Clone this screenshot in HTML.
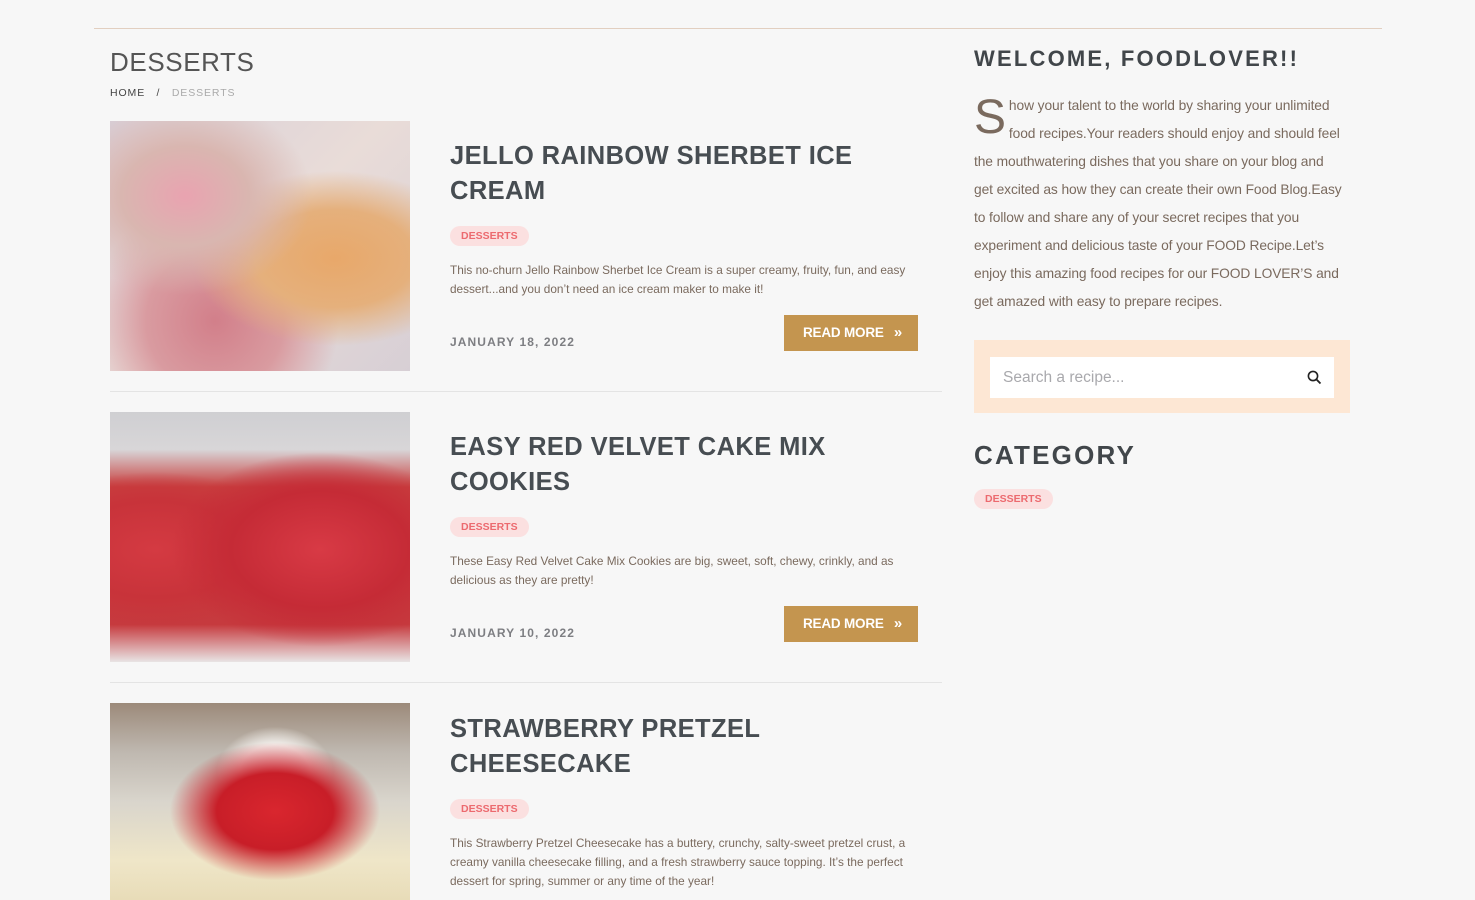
<!DOCTYPE html>
<html><head><meta charset="utf-8"><style>
*{margin:0;padding:0;box-sizing:border-box}
body{width:1475px;height:900px;overflow:hidden;background:#f7f7f7;font-family:"Liberation Sans",sans-serif;position:relative}
.abs{position:absolute}
.topline{left:94px;top:28px;width:1288px;height:1px;background:#e2cfc0}
h1{position:absolute;left:110px;top:47px;font-size:26px;font-weight:normal;color:#555;letter-spacing:0.6px}
.bc{left:110px;top:87px;font-size:10.5px;letter-spacing:0.9px;color:#444}
.bc span{color:#aaa}
.img{position:absolute;left:110px;width:300px;height:250px;overflow:hidden}
.title{position:absolute;left:450px;font-size:25.5px;font-weight:bold;color:#474d52;line-height:35px;letter-spacing:0.4px;width:460px}
.tag{position:absolute;height:20px;padding:0 11px;border-radius:10px;background:#fbe0e0;color:#ec6a6f;font-size:10.5px;font-weight:bold;line-height:20px}
.ex{position:absolute;left:450px;width:470px;font-size:11.8px;line-height:19px;color:#7a6a5e}
.date{position:absolute;left:450px;font-size:12px;font-weight:bold;letter-spacing:1.1px;color:#7d7e82}
.btn{position:absolute;left:784px;width:134px;height:36px;background:#c4954f;color:#fff;font-size:13.5px;font-weight:bold;line-height:36px;padding-left:19px;letter-spacing:-0.2px}
.btn b{position:absolute;right:16px;top:0;font-size:15px}
.div{position:absolute;left:110px;width:832px;height:1px;background:#e4e4e4}
.sh{position:absolute;left:974px;font-weight:bold;color:#41464a;letter-spacing:2.2px}
.p{left:974px;top:92px;width:400px;font-size:13.8px;line-height:28px;color:#7a6a5e;letter-spacing:-0.1px;white-space:nowrap}
.dc{float:left;font-size:48px;line-height:40px;margin:6px 3px 0 0;color:#7a6a5e}
</style></head><body>
<div class="abs topline"></div>
<h1>DESSERTS</h1>
<div class="abs bc">HOME &nbsp;&nbsp;/&nbsp;&nbsp; <span>DESSERTS</span></div>

<div class="img" style="top:121px;background:radial-gradient(ellipse at 25% 30%,#e9a3b0 0,#d9b6b0 20%,transparent 40%),radial-gradient(ellipse at 75% 55%,#e8a86a 0,#e5b07c 25%,transparent 45%),radial-gradient(ellipse at 35% 80%,#d27f8a 0,#d99ba0 25%,transparent 45%),linear-gradient(135deg,#d8cfd8,#e9dcd8 50%,#d7cfd5)"></div>
<div class="title" style="top:139px">JELLO RAINBOW SHERBET ICE CREAM</div>
<div class="tag" style="left:450px;top:226px">DESSERTS</div>
<div class="ex" style="top:261px">This no-churn Jello Rainbow Sherbet Ice Cream is a super creamy, fruity, fun, and easy dessert...and you don’t need an ice cream maker to make it!</div>
<div class="date" style="top:335px">JANUARY 18, 2022</div>
<div class="btn" style="top:315px">READ MORE<b>»</b></div>
<div class="div" style="top:391px"></div>

<div class="img" style="top:412px;background:radial-gradient(ellipse at 70% 55%,#d83a45 0,#c52b36 30%,transparent 50%),radial-gradient(ellipse at 15% 55%,#d43a42 0,#c8333a 25%,transparent 40%),linear-gradient(180deg,#cfcfd2 0,#d8d6d8 15%,#c8403f 30%,#c63a3e 85%,#e8e4e4 100%)"></div>
<div class="title" style="top:430px">EASY RED VELVET CAKE MIX COOKIES</div>
<div class="tag" style="left:450px;top:517px">DESSERTS</div>
<div class="ex" style="top:552px">These Easy Red Velvet Cake Mix Cookies are big, sweet, soft, chewy, crinkly, and as delicious as they are pretty!</div>
<div class="date" style="top:626px">JANUARY 10, 2022</div>
<div class="btn" style="top:606px">READ MORE<b>»</b></div>
<div class="div" style="top:682px"></div>

<div class="img" style="top:703px;height:197px;background:radial-gradient(ellipse at 55% 55%,#d9262e 0,#c81e28 25%,transparent 45%),radial-gradient(ellipse at 55% 35%,#fff 0,#f3f0ec 15%,transparent 25%),linear-gradient(180deg,#9c8a7a 0,#bfb8b0 25%,#d9d5cc 50%,#efe6c8 80%,#e8dcb8 100%)"></div>
<div class="title" style="top:712px">STRAWBERRY PRETZEL CHEESECAKE</div>
<div class="tag" style="left:450px;top:799px">DESSERTS</div>
<div class="ex" style="top:834px;width:470px">This Strawberry Pretzel Cheesecake has a buttery, crunchy, salty-sweet pretzel crust, a creamy vanilla cheesecake filling, and a fresh strawberry sauce topping. It’s the perfect dessert for spring, summer or any time of the year!</div>

<div class="sh" style="top:46px;font-size:22px">WELCOME, FOODLOVER!!</div>
<div class="abs p"><span class="dc">S</span>how your talent to the world by sharing your unlimited<br>food recipes.Your readers should enjoy and should feel<br>the mouthwatering dishes that you share on your blog and<br>get excited as how they can create their own Food Blog.Easy<br>to follow and share any of your secret recipes that you<br>experiment and delicious taste of your FOOD Recipe.Let’s<br>enjoy this amazing food recipes for our FOOD LOVER’S and<br>get amazed with easy to prepare recipes.</div>
<div class="abs" style="left:974px;top:340px;width:376px;height:73px;background:#fde7d4"></div>
<div class="abs" style="left:990px;top:357px;width:344px;height:41px;background:#fff;font-size:15.5px;color:#a9a9ad;line-height:41px;padding-left:13px">Search a recipe...
<svg style="position:absolute;right:12px;top:13px" width="15" height="15" viewBox="0 0 15 15"><circle cx="6" cy="6" r="4.6" fill="none" stroke="#222" stroke-width="1.6"/><path d="M9.4 9.4L13.5 13.5" stroke="#222" stroke-width="1.8"/></svg></div>
<div class="sh" style="top:440px;font-size:26px">CATEGORY</div>
<div class="tag" style="left:974px;top:489px">DESSERTS</div>
</body></html>
